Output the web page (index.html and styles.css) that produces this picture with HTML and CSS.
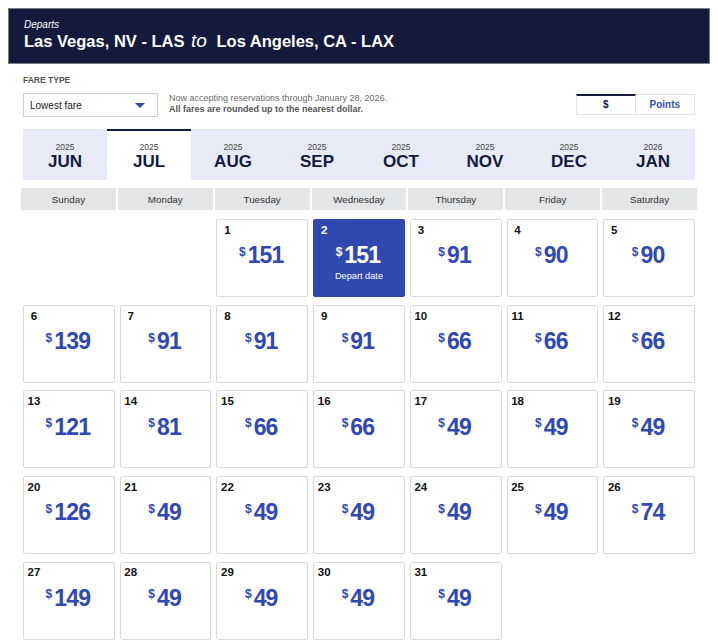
FILE: index.html
```html
<!DOCTYPE html>
<html>
<head>
<meta charset="utf-8">
<link rel="stylesheet" href="styles.css">
</head>
<body>
<div class="hero">
  <div class="departs">Departs</div>
  <div class="route">Las Vegas, NV - LAS <span class="to">to</span> Los Angeles, CA - LAX</div>
</div>
<div class="content">
  <div class="fare-label">FARE TYPE</div>
  <div class="controls">
    <div class="select"><span>Lowest fare</span><span class="caret"></span></div>
    <div class="info">
      <div>Now accepting reservations through January 28, 2026.</div>
      <div class="bold">All fares are rounded up to the nearest dollar.</div>
    </div>
    <div class="toggle">
      <div class="opt active">$</div>
      <div class="opt points">Points</div>
    </div>
  </div>
  <div class="months">
    <div class="tab"><div class="yr">2025</div><div class="mo">JUN</div></div>
    <div class="tab sel"><div class="yr">2025</div><div class="mo">JUL</div></div>
    <div class="tab"><div class="yr">2025</div><div class="mo">AUG</div></div>
    <div class="tab"><div class="yr">2025</div><div class="mo">SEP</div></div>
    <div class="tab"><div class="yr">2025</div><div class="mo">OCT</div></div>
    <div class="tab"><div class="yr">2025</div><div class="mo">NOV</div></div>
    <div class="tab"><div class="yr">2025</div><div class="mo">DEC</div></div>
    <div class="tab"><div class="yr">2026</div><div class="mo">JAN</div></div>
  </div>
  <div class="cal">
    <div class="dow">
      <div>Sunday</div><div>Monday</div><div>Tuesday</div><div>Wednesday</div><div>Thursday</div><div>Friday</div><div>Saturday</div>
    </div>
    <div class="grid">
      <div class="blank"></div>
      <div class="blank"></div>
      <div class="cell"><div class="num">1</div><div class="price"><span class="cur">$</span><span class="amt">151</span></div></div>
      <div class="cell picked"><div class="num">2</div><div class="price"><span class="cur">$</span><span class="amt">151</span></div><div class="note">Depart date</div></div>
      <div class="cell"><div class="num">3</div><div class="price"><span class="cur">$</span><span class="amt">91</span></div></div>
      <div class="cell"><div class="num">4</div><div class="price"><span class="cur">$</span><span class="amt">90</span></div></div>
      <div class="cell"><div class="num">5</div><div class="price"><span class="cur">$</span><span class="amt">90</span></div></div>
      <div class="cell"><div class="num">6</div><div class="price"><span class="cur">$</span><span class="amt">139</span></div></div>
      <div class="cell"><div class="num">7</div><div class="price"><span class="cur">$</span><span class="amt">91</span></div></div>
      <div class="cell"><div class="num">8</div><div class="price"><span class="cur">$</span><span class="amt">91</span></div></div>
      <div class="cell"><div class="num">9</div><div class="price"><span class="cur">$</span><span class="amt">91</span></div></div>
      <div class="cell"><div class="num">10</div><div class="price"><span class="cur">$</span><span class="amt">66</span></div></div>
      <div class="cell"><div class="num">11</div><div class="price"><span class="cur">$</span><span class="amt">66</span></div></div>
      <div class="cell"><div class="num">12</div><div class="price"><span class="cur">$</span><span class="amt">66</span></div></div>
      <div class="cell"><div class="num">13</div><div class="price"><span class="cur">$</span><span class="amt">121</span></div></div>
      <div class="cell"><div class="num">14</div><div class="price"><span class="cur">$</span><span class="amt">81</span></div></div>
      <div class="cell"><div class="num">15</div><div class="price"><span class="cur">$</span><span class="amt">66</span></div></div>
      <div class="cell"><div class="num">16</div><div class="price"><span class="cur">$</span><span class="amt">66</span></div></div>
      <div class="cell"><div class="num">17</div><div class="price"><span class="cur">$</span><span class="amt">49</span></div></div>
      <div class="cell"><div class="num">18</div><div class="price"><span class="cur">$</span><span class="amt">49</span></div></div>
      <div class="cell"><div class="num">19</div><div class="price"><span class="cur">$</span><span class="amt">49</span></div></div>
      <div class="cell"><div class="num">20</div><div class="price"><span class="cur">$</span><span class="amt">126</span></div></div>
      <div class="cell"><div class="num">21</div><div class="price"><span class="cur">$</span><span class="amt">49</span></div></div>
      <div class="cell"><div class="num">22</div><div class="price"><span class="cur">$</span><span class="amt">49</span></div></div>
      <div class="cell"><div class="num">23</div><div class="price"><span class="cur">$</span><span class="amt">49</span></div></div>
      <div class="cell"><div class="num">24</div><div class="price"><span class="cur">$</span><span class="amt">49</span></div></div>
      <div class="cell"><div class="num">25</div><div class="price"><span class="cur">$</span><span class="amt">49</span></div></div>
      <div class="cell"><div class="num">26</div><div class="price"><span class="cur">$</span><span class="amt">74</span></div></div>
      <div class="cell"><div class="num">27</div><div class="price"><span class="cur">$</span><span class="amt">149</span></div></div>
      <div class="cell"><div class="num">28</div><div class="price"><span class="cur">$</span><span class="amt">49</span></div></div>
      <div class="cell"><div class="num">29</div><div class="price"><span class="cur">$</span><span class="amt">49</span></div></div>
      <div class="cell"><div class="num">30</div><div class="price"><span class="cur">$</span><span class="amt">49</span></div></div>
      <div class="cell"><div class="num">31</div><div class="price"><span class="cur">$</span><span class="amt">49</span></div></div>
    </div>
  </div>
</div>
</body>
</html>
```

FILE: styles.css
```css
* { box-sizing: border-box; }
html, body { background: #fff; }
body {
  margin: 8px;
  font-family: "Liberation Sans", Arial, Helvetica, sans-serif;
  color: #222;
}
.hero {
  height: 56px;
  background: #131a3e;
  border: 1px solid #7d7d7d;
  padding: 9.6px 15px 0;
  color: #fff;
}
.departs {
  font-size: 10px;
  line-height: 12px;
  font-style: italic;
}
.route {
  font-size: 16.5px;
  line-height: 20px;
  font-weight: bold;
  white-space: nowrap;
}
.route .to {
  font-size: 19px;
  font-weight: normal;
  font-style: italic;
  margin: 0 5px 0 2px;
}
.content {
  padding: 0 15px;
}
.fare-label {
  margin-top: 11px;
  font-size: 8.5px;
  line-height: 11px;
  font-weight: bold;
  color: #555;
}
.controls {
  display: flex;
  align-items: flex-start;
  margin-top: 7px;
}
.select {
  width: 135px;
  height: 24px;
  border: 1px solid #cfcfcf;
  display: flex;
  align-items: center;
  justify-content: space-between;
  padding: 0 12px 0 6px;
  font-size: 10px;
  color: #222;
}
.caret {
  width: 0;
  height: 0;
  border-left: 5.5px solid transparent;
  border-right: 5.5px solid transparent;
  border-top: 5.5px solid #3048b4;
  margin-top: 1px;
}
.info {
  margin-left: 11px;
  font-size: 9px;
  line-height: 11.3px;
  color: #6a6a6a;
}
.info .bold {
  font-weight: bold;
  color: #555;
}
.toggle {
  margin-left: auto;
  display: flex;
  margin-top: 0.5px;
}
.opt {
  width: 59.5px;
  height: 21px;
  border: 1px solid #e3e3e3;
  display: flex;
  align-items: center;
  justify-content: center;
  font-size: 10px;
  font-weight: bold;
}
.opt.active {
  border-top: 2.5px solid #131a3e;
  color: #131a3e;
}
.opt.points {
  border-left: none;
  color: #3a4cb8;
}
.months {
  margin-top: 12px;
  display: flex;
  background: #e8ebf7;
  height: 51px;
}
.tab {
  flex: 1 1 0;
  text-align: center;
  padding-top: 13px;
  color: #131a3e;
}
.tab.sel {
  background: #fff;
  border-top: 2.5px solid #131a3e;
  padding-top: 10.5px;
}
.yr {
  font-size: 8.5px;
  line-height: 10px;
  color: #444;
}
.mo {
  margin-top: 1px;
  font-size: 17px;
  line-height: 18px;
  font-weight: bold;
}
.cal {
  margin: 8px -2px 0;
}
.dow {
  display: grid;
  grid-template-columns: repeat(7, 1fr);
  gap: 2px;
}
.dow div {
  height: 22.3px;
  background: #e4e5e7;
  display: flex;
  align-items: center;
  justify-content: center;
  font-size: 9.8px;
  color: #333;
}
.grid {
  margin-top: 9px;
  padding: 0 2px;
  display: grid;
  grid-template-columns: repeat(7, 1fr);
  column-gap: 5px;
  row-gap: 7.6px;
}
.cell {
  height: 78px;
  border: 1px solid #d9d9d9;
  border-radius: 2px;
  padding-top: 2.8px;
}
.num {
  width: 20px;
  text-align: center;
  font-size: 11.5px;
  line-height: 14px;
  font-weight: bold;
  color: #111;
}
.price {
  margin-top: 6.3px;
  display: flex;
  justify-content: center;
  align-items: flex-start;
  color: #3048b4;
  font-weight: bold;
  padding-right: 2px;
}
.cur {
  font-size: 12px;
  line-height: 12px;
  margin-top: 2.6px;
  margin-right: 2px;
}
.amt {
  font-size: 23px;
  line-height: 24px;
  letter-spacing: -0.8px;
}
.cell.picked {
  background: #2f49b1;
  border-color: #2f49b1;
}
.cell.picked .num,
.cell.picked .price {
  color: #fff;
}
.note {
  margin-top: 3px;
  text-align: center;
  font-size: 9.2px;
  line-height: 12px;
  color: #fff;
}
```
